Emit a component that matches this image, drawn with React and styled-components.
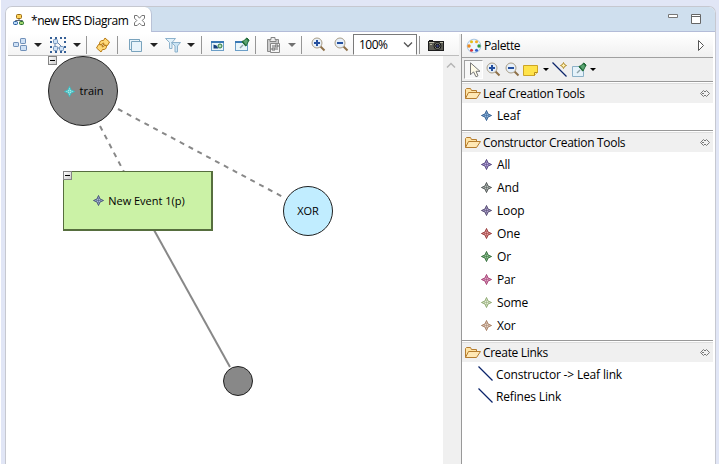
import React from "react";
import styled, { createGlobalStyle, css } from "styled-components";

const GlobalStyle = createGlobalStyle`
  * { box-sizing: border-box; }
  html, body { margin: 0; background: #e1e6f6; overflow: hidden; }
  body { font: 12px/16px "Open Sans", "Noto Sans", sans-serif; color: #000; }
  svg { display: block; flex: none; overflow: visible; }
`;

const Workbench = styled.div`
  width: 719px;
  height: 464px;
  padding: 6px 3px 0 4px;
  background: #e1e6f6;
  border-left: 1px solid #fff;
`;
const Editor = styled.section`
  height: 458px;
  display: flex;
  flex-direction: column;
  background: #fff;
  border: 1px solid #c6c8d0;
  border-bottom: 0;
  border-radius: 7px 7px 0 0;
  overflow: hidden;
`;
const TabBar = styled.header`
  height: 25px;
  flex: none;
  display: flex;
  justify-content: space-between;
  background: #cfdfee;
  border-bottom: 1px solid #b3bcd8;
`;
const Tab = styled.div`
  width: 146px;
  height: 25px;
  display: flex;
  align-items: center;
  padding: 1px 0 0 7px;
  background: #fff;
  border-right: 1px solid #b9c2d6;
  border-radius: 0 7px 0 0;
`;
const TabTitle = styled.div`
  flex: none;
  width: 109px;
  padding: 1px 0 0 6px;
  white-space: nowrap;
`;
const WindowControls = styled.div`
  display: flex;
  gap: 13px;
  padding: 7px 14px 0 0;
`;
const Text = styled.span`
  font-size: ${(p) => p.$size || 12}px;
  letter-spacing: ${(p) => p.$track || 0}px;
  white-space: pre;
`;
const Body = styled.div`
  flex: 1;
  display: flex;
  padding: 2px 2px 0;
  min-height: 0;
`;
const Main = styled.div`
  width: 453px;
  display: flex;
  flex-direction: column;
  background: #f0f0f0;
`;
const Toolbar = styled.div`
  height: 22px;
  width: 451px;
  flex: none;
  display: flex;
  align-items: center;
  background: linear-gradient(#fff, #f4f4f4);
  border-bottom: 1px solid #bdbdbd;
`;
const Slot = styled.div`
  flex: none;
  width: ${(p) => p.$w || 16}px;
  margin-left: ${(p) => p.$gap || 0}px;
`;
const Separator = styled.div`
  flex: none;
  width: 1px;
  height: 18px;
  margin-left: ${(p) => p.$gap}px;
  background: #969696;
`;
const ZoomBox = styled.div`
  width: 64px;
  height: 21px;
  flex: none;
  align-self: flex-start;
  margin-left: 3px;
  display: flex;
  align-items: center;
  justify-content: space-between;
  padding: 0 4px 0 5px;
  background: #fff;
  border: 1px solid #7a7a7a;
  border-bottom-color: #fff;
`;
const Workspace = styled.div`
  flex: 1;
  display: flex;
`;
const Canvas = styled.div`
  position: relative;
  width: 435px;
  overflow: hidden;
  background: #fff;
`;
const Links = styled.svg`
  position: absolute;
  inset: 0;
`;
const ScrollTrack = styled.div`
  width: 16px;
  padding: 7px 0 0 4px;
  background: #f0f0f0;
`;
const Node = styled.div`
  position: absolute;
  left: ${(p) => p.$x}px;
  top: ${(p) => p.$y}px;
  width: ${(p) => p.$w}px;
  height: ${(p) => p.$h}px;
  display: flex;
  align-items: center;
  justify-content: center;
  gap: 4px;
  padding-left: ${(p) => p.$pad || 0}px;
  background: ${(p) => p.$fill};
  ${(p) =>
    p.$round
      ? css`
          border: 1px solid #202020;
          border-radius: 50%;
        `
      : css`
          border: 1px solid #566e3e;
          border-width: 1px 2px 2px 1px;
        `}
`;
const Collapse = styled.div`
  position: absolute;
  left: ${(p) => p.$x}px;
  top: ${(p) => p.$y}px;
  width: 9px;
  height: 9px;
  border: 1px solid #848484;
  background: linear-gradient(135deg, #fff, #ccc);
  &::after {
    content: "";
    display: block;
    height: 1px;
    margin: 3px 1px;
    background: #000;
  }
`;
const Palette = styled.aside`
  flex: 1;
  border-left: 1px solid #999;
`;
const PaletteTitle = styled.div`
  height: 24px;
  display: flex;
  align-items: center;
  padding: 0 9px 0 4px;
  background: linear-gradient(#fff, #f0f0f0);
  border-bottom: 1px solid #a0a0a0;
`;
const PaletteTools = styled.div`
  height: 24px;
  display: flex;
  align-items: center;
  padding-left: 2px;
  background: #efefef;
  border-bottom: 1px solid #999;
`;
const SelectedTool = styled.div`
  width: 19px;
  height: 19px;
  padding: 1px;
  background: #f8f8f8;
  border: 1px solid;
  border-color: #a0a0a0 #fff #fff #a0a0a0;
`;
const Drawer = styled.section`
  height: ${(p) => p.$h}px;
  border-bottom: ${(p) => (p.$last ? 0 : 1)}px solid #999;
  padding-top: 1px;
`;
const DrawerHeader = styled.div`
  height: 20px;
  display: flex;
  align-items: center;
  padding: 0 3px 0 3px;
  background: #f0f0f0;
  border-top: 1px solid #ddd;
`;
const Grow = styled.div`
  flex: 1;
  padding-left: 2px;
`;
const Entries = styled.div`
  padding: ${(p) => p.$top}px 0 0 ${(p) => p.$left}px;
`;
const Entry = styled.div`
  height: ${(p) => p.$h}px;
  display: flex;
  align-items: center;
  gap: ${(p) => p.$gap}px;
`;
const LinkName = styled.div`
  padding-top: 2px;
`;

const Icon = ({ children, w = 16, h = 16 }) => (
  <svg width={w} height={h} viewBox={`0 0 ${w} ${h}`} fill="none">
    {children}
  </svg>
);
const Arrow = ({ gap, color = "#222", w = 8 }) => (
  <Slot $gap={gap} $w={w}>
    <svg width={w} height={w / 2} viewBox="0 0 8 4">
      <path d="M0 0h8L4 4z" fill={color} />
    </svg>
  </Slot>
);
const Star = ({ color, fill = "#bbb" }) => (
  <Icon w={11} h={11}>
    <path d="M5.5 .5 7 4 10.5 5.5 7 7 5.5 10.5 4 7 .5 5.5 4 4z" fill={fill} stroke={color} />
    <path d="M5.5 3v5M3 5.5h5" stroke={color} strokeOpacity=".5" />
  </Icon>
);
const TreeIcon = () => (
  <Icon w={12} h={12}>
    <path d="M6 4v3M2.5 8V6.5h7V8" stroke="#59636c" />
    <rect x="3.5" y=".5" width="5" height="4" rx="1" fill="#ffd45a" stroke="#9a6b17" />
    <rect x=".5" y="7.5" width="4" height="3" rx="1" fill="#b9d7f5" stroke="#245a9c" />
    <rect x="6.5" y="7.5" width="4" height="3" rx="1" fill="#9ed36d" stroke="#26702c" />
  </Icon>
);
const CloseIcon = () => (
  <Icon w={11} h={11}>
    <path d="M.5.5h2.7l2.3 2.7L7.8.5h2.7v2.7L8.2 5.5l2.3 2.3v2.7H7.8L5.5 8.2l-2.3 2.3H.5V7.8l2.3-2.3L.5 3.2z" fill="#fff" stroke="#747474" />
  </Icon>
);
const ArrangeIcon = () => (
  <Icon>
    <g fill="#cfe1f5" stroke="#6f8fb8">
      <rect x="1.5" y="5.5" width="5" height="4" rx=".6" />
      <rect x="8.5" y="1.5" width="5" height="5" rx=".6" />
      <rect x="8.5" y="8.5" width="6" height="5" rx=".6" />
    </g>
  </Icon>
);
const SELECTION_DOTS = [
  [0, 0], [5, 0], [10, 0], [14, 0],
  [0, 4], [14, 4], [0, 9], [14, 9],
  [0, 14], [5, 14], [10, 14], [14, 14],
];
const SelectAllIcon = () => (
  <Icon>
    <path d="M5 6v4M7 5l5 5M7 11h3" stroke="#6282ae" />
    <g fill="#d2e4f8" stroke="#7596bc">
      <rect x="3.5" y="2.5" width="4" height="4" rx=".8" />
      <rect x="3.5" y="9.5" width="4" height="4" rx=".8" />
      <rect x="9.5" y="9.5" width="4" height="4" rx=".8" />
    </g>
    {SELECTION_DOTS.map(([x, y]) => (
      <rect key={`${x}-${y}`} x={x} y={y} width="2" height="2" fill="#355f96" />
    ))}
  </Icon>
);
const RefreshArrow = () => (
  <path d="M4.5 7Q4.5 3 8.5 3.5L10 1l4.5 4-2 3.5-4-.5.3-2Q6.8 6 6.5 8z" fill="#ffd978" stroke="#b87912" />
);
const RefreshIcon = () => (
  <Icon>
    <RefreshArrow />
    <g transform="rotate(180 8 8)"><RefreshArrow /></g>
  </Icon>
);
const LayersIcon = () => (
  <Icon>
    <path d="M2.5 12.5v-10h10M4.5 4.5h10v10h-10z" fill="#e8f3fa" stroke="#79a3bd" />
    <path d="M2.5 2.5h10v2M2.5 2.5v10h2" stroke="#79a3bd" />
  </Icon>
);
const FilterIcon = () => (
  <Icon>
    <path d="M.5 1.5h10L7 5.5v6H4.5v-6z" fill="#e1f1fa" stroke="#8db2cc" />
    <path d="M6.5 5.5h9l-3 3.5V15h-2.5V9z" fill="#cbe5f5" stroke="#8db2cc" />
  </Icon>
);
const WindowIcon = ({ pin }) => (
  <Icon>
    <rect x="1.5" y="4.5" width="12" height="9" fill="#e9f5fa" stroke="#6b9ec7" />
    <path d="M1 5h13" stroke="#3a79b5" strokeWidth="2" />
    {pin ? (
      <PinShape />
    ) : (
      <>
        <path d="m3.5 7.5 3 1 2 3H3.5z" fill="#16407c" />
        <circle cx="10" cy="9" r="2" fill="#b9dcc0" stroke="#2e7a3c" />
      </>
    )}
  </Icon>
);
const PinShape = () => (
  <g>
    <path d="m9 8-3 3" stroke="#8fa3a9" strokeWidth="1.4" />
    <path d="m8 5 4-3 1-1 2 2-1 2-2 4z" fill="#5ba572" stroke="#236c3a" />
    <path d="m8 4 4 5M12 1l3 3" stroke="#236c3a" strokeWidth="1.4" />
  </g>
);
const NoteWithPin = () => (
  <Icon>
    <path d="M1.5 4.5h11v10h-11z" fill="#e5f2fa" stroke="#8cb1c7" />
    <PinShape />
  </Icon>
);
const ClipboardIcon = () => (
  <Icon>
    <path d="M1.5 2.5h11v12h-11z" fill="#ccc" stroke="#898989" />
    <path d="M4 2.5h1V.5h4v2h1v2H4z" fill="#eee" stroke="#858585" />
    <path d="M4.5 6.5h9v9h-9z" fill="#f5f5f5" stroke="#888" />
    <path d="M9 8h3v2H9zM6 11h3v2H6zM10 12h2M6 9h2" stroke="#666" />
  </Icon>
);
const ZoomIcon = ({ plus }) => (
  <Icon>
    <path d="m9.5 9.5 4 4" stroke="#8e7048" strokeWidth="2" />
    <circle cx="6" cy="6" r="5" fill="#e6eff9" stroke="#a99d86" />
    <path d={plus ? "M3 6h6M6 3v6" : "M3 6h6"} stroke="#244f9e" strokeWidth="2" />
  </Icon>
);
const CameraIcon = () => (
  <Icon>
    <path d="M0 4h1V3h4v1h11v10H0z" fill="#1c1c1c" />
    <path d="M1 5h14v8H1z" fill="#5c5c54" />
    <path d="M1 5.5h5M2 7.5h2M12 5.5h3" stroke="#b8b8a4" />
    <circle cx="9.5" cy="9" r="3.5" fill="#8b8e83" stroke="#111" />
    <circle cx="9.5" cy="9" r="1.8" fill="#39427a" stroke="#090909" />
  </Icon>
);
const PaletteIcon = () => (
  <Icon>
    <circle cx="8" cy="8" r="6.8" fill="#edf5fd" stroke="#a9c6e2" />
    <circle cx="5.5" cy="3.8" r="1.5" fill="#e5bd18" />
    <circle cx="10.5" cy="3.8" r="1.5" fill="#f2ab23" />
    <circle cx="3" cy="8" r="1.7" fill="#ed891b" />
    <circle cx="13" cy="8" r="1.7" fill="#30993e" />
    <circle cx="5.5" cy="12.2" r="1.5" fill="#d7353b" />
    <circle cx="10.5" cy="12.2" r="1.5" fill="#315fcf" />
  </Icon>
);
const CursorIcon = () => (
  <Icon>
    <path d="M4.5.8v12l3-3 2.5 5 2-1-2-4.5h4z" fill="#fffbe8" stroke="#777" />
  </Icon>
);
const NoteIcon = () => (
  <Icon>
    <path d="M.5 3.5h14v7l-3 3H.5z" fill="#ffe34a" stroke="#cda526" />
    <path d="M14.5 10.5h-3v3" fill="#fff3a0" stroke="#b98a17" />
  </Icon>
);
const ConnectionIcon = ({ spark }) => (
  <Icon>
    <path d="m.5.5 14 14" stroke="#0b246a" strokeWidth="1.3" />
    {spark && <path d="m11.5.5 1 2 2 1-2 1-1 2-1-2-2-1 2-1z" fill="#fff2b0" stroke="#b08a2c" />}
  </Icon>
);
const FolderIcon = () => (
  <Icon>
    <path d="M.5 12.5v-9l1-1h4l1 2h5v3" fill="#ffe4a5" stroke="#b57d30" />
    <path d="m.5 12.5 3-6h12l-4 6z" fill="#ffe8b5" stroke="#b57d30" />
  </Icon>
);
const DrawerPinIcon = () => (
  <Icon w={10} h={7}>
    <path d="M3.5.5.5 3.5l3 3M2 3.5h2M6.5.5l3 3-3 3M3.5.5 5 2 6.5.5M3.5 6.5 5 5l1.5 1.5" stroke="#777" />
  </Icon>
);

const LEAF = [["Leaf", "#315e91", "#8fb5dc"]];
const CONSTRUCTORS = [
  ["All", "#51427d", "#b8a9dc"],
  ["And", "#4d5352", "#bbc2bf"],
  ["Loop", "#50476e", "#b0a2cf"],
  ["One", "#973737", "#e4a0a0"],
  ["Or", "#316d38", "#9bc79d"],
  ["Par", "#a63d73", "#dda9c4"],
  ["Some", "#8eaa70", "#e4ead8"],
  ["Xor", "#a77d61", "#e3d4c9"],
];

const PaletteDrawer = ({ title, h, last, left, top = 1, children }) => (
  <Drawer $h={h} $last={last}>
    <DrawerHeader>
      <FolderIcon />
      <Grow><Text $track={-0.31}>{title}</Text></Grow>
      <DrawerPinIcon />
    </DrawerHeader>
    <Entries $left={left} $top={top}>{children}</Entries>
  </Drawer>
);
const StarEntries = ({ items }) =>
  items.map(([name, color, fill]) => (
    <Entry key={name} $h={23} $gap={5}>
      <Star color={color} fill={fill} />
      <Text $track={-0.15}>{name}</Text>
    </Entry>
  ));

export default function App() {
  return (
    <Workbench>
      <GlobalStyle />
      <Editor>
        <TabBar>
          <Tab>
            <TreeIcon />
            <TabTitle><Text $track={-0.45}>*new ERS Diagram</Text></TabTitle>
            <CloseIcon />
          </Tab>
          <WindowControls>
            <Icon w={10} h={11}><path d="M.5.5h9v3h-9z" fill="#fff" stroke="#777" /></Icon>
            <Icon w={10} h={10}><path d="M.5.5h9v9h-9zM.5 2.5h9" fill="#fff" stroke="#666" /></Icon>
          </WindowControls>
        </TabBar>
        <Body>
          <Main>
            <Toolbar>
              <Slot $gap={4}><ArrangeIcon /></Slot>
              <Arrow gap={6} />
              <Slot $gap={8}><SelectAllIcon /></Slot>
              <Arrow gap={7} />
              <Separator $gap={5} />
              <Slot $gap={8}><RefreshIcon /></Slot>
              <Separator $gap={6} />
              <Slot $gap={9}><LayersIcon /></Slot>
              <Arrow gap={7} />
              <Slot $gap={7}><FilterIcon /></Slot>
              <Arrow gap={6} />
              <Separator $gap={6} />
              <Slot $gap={8}><WindowIcon /></Slot>
              <Slot $gap={8}><WindowIcon pin /></Slot>
              <Separator $gap={5} />
              <Slot $gap={10}><ClipboardIcon /></Slot>
              <Arrow gap={6} color="#707070" />
              <Separator $gap={5} />
              <Slot $gap={9}><ZoomIcon plus /></Slot>
              <Slot $gap={7}><ZoomIcon /></Slot>
              <ZoomBox>
                <Text $track={-0.5}>100%</Text>
                <Icon w={8} h={5}><path d="m0 .5 4 4 4-4" stroke="#555" strokeWidth="1.3" /></Icon>
              </ZoomBox>
              <Separator $gap={2} />
              <Slot $gap={8}><CameraIcon /></Slot>
            </Toolbar>
            <Workspace>
              <Canvas>
                <Links width="435" height="408">
                  <g stroke="#888" strokeWidth="2">
                    <path d="M92 70 116 116M110 53 275 141" strokeDasharray="5 5" />
                    <path d="m146 174 76 137" />
                  </g>
                </Links>
                <Node $x={40} $y={0} $w={70} $h={70} $pad={2} $fill="#888" $round>
                  <Star color="#38bfc4" fill="#a6e9e8" />
                  <Text $size={11}>train</Text>
                </Node>
                <Collapse $x={40} $y={0} />
                <Node $x={55} $y={115} $w={150} $h={60} $pad={3} $fill="#cbf2a6">
                  <Star color="#48547a" fill="#a6b9d7" />
                  <Text $size={11}>New Event 1(p)</Text>
                </Node>
                <Collapse $x={55} $y={115} />
                <Node $x={275} $y={130} $w={50} $h={50} $fill="#c1edff" $round><Text $size={11}>XOR</Text></Node>
                <Node $x={215} $y={310} $w={30} $h={30} $fill="#888" $round />
              </Canvas>
              <ScrollTrack>
                <Icon w={8} h={5}><path d="m0 4.5 4-4 4 4" stroke="#b5b5b5" strokeWidth="1.5" /></Icon>
              </ScrollTrack>
            </Workspace>
          </Main>
          <Palette>
            <PaletteTitle>
              <PaletteIcon />
              <Grow><Text $track={-0.4}>Palette</Text></Grow>
              <Icon w={6} h={11}><path d="m.5.5 5 5-5 5z" fill="#fff" stroke="#555" /></Icon>
            </PaletteTitle>
            <PaletteTools>
              <SelectedTool><CursorIcon /></SelectedTool>
              <Slot $gap={3}><ZoomIcon plus /></Slot>
              <Slot $gap={3}><ZoomIcon /></Slot>
              <Slot $gap={2}><NoteIcon /></Slot>
              <Arrow gap={4} w={6} color="#000" />
              <Slot $gap={3}><ConnectionIcon spark /></Slot>
              <Slot $gap={3}><NoteWithPin /></Slot>
              <Arrow gap={3} w={6} color="#000" />
            </PaletteTools>
            <PaletteDrawer title="Leaf Creation Tools" h={49} left={19}>
              <StarEntries items={LEAF} />
            </PaletteDrawer>
            <PaletteDrawer title="Constructor Creation Tools" h={210} left={19}>
              <StarEntries items={CONSTRUCTORS} />
            </PaletteDrawer>
            <PaletteDrawer title="Create Links" h={90} left={16} last>
              {["Constructor -> Leaf link", "Refines Link"].map((name) => (
                <Entry key={name} $h={22} $gap={2}>
                  <ConnectionIcon />
                  <LinkName><Text $track={-0.17}>{name}</Text></LinkName>
                </Entry>
              ))}
            </PaletteDrawer>
          </Palette>
        </Body>
      </Editor>
    </Workbench>
  );
}
